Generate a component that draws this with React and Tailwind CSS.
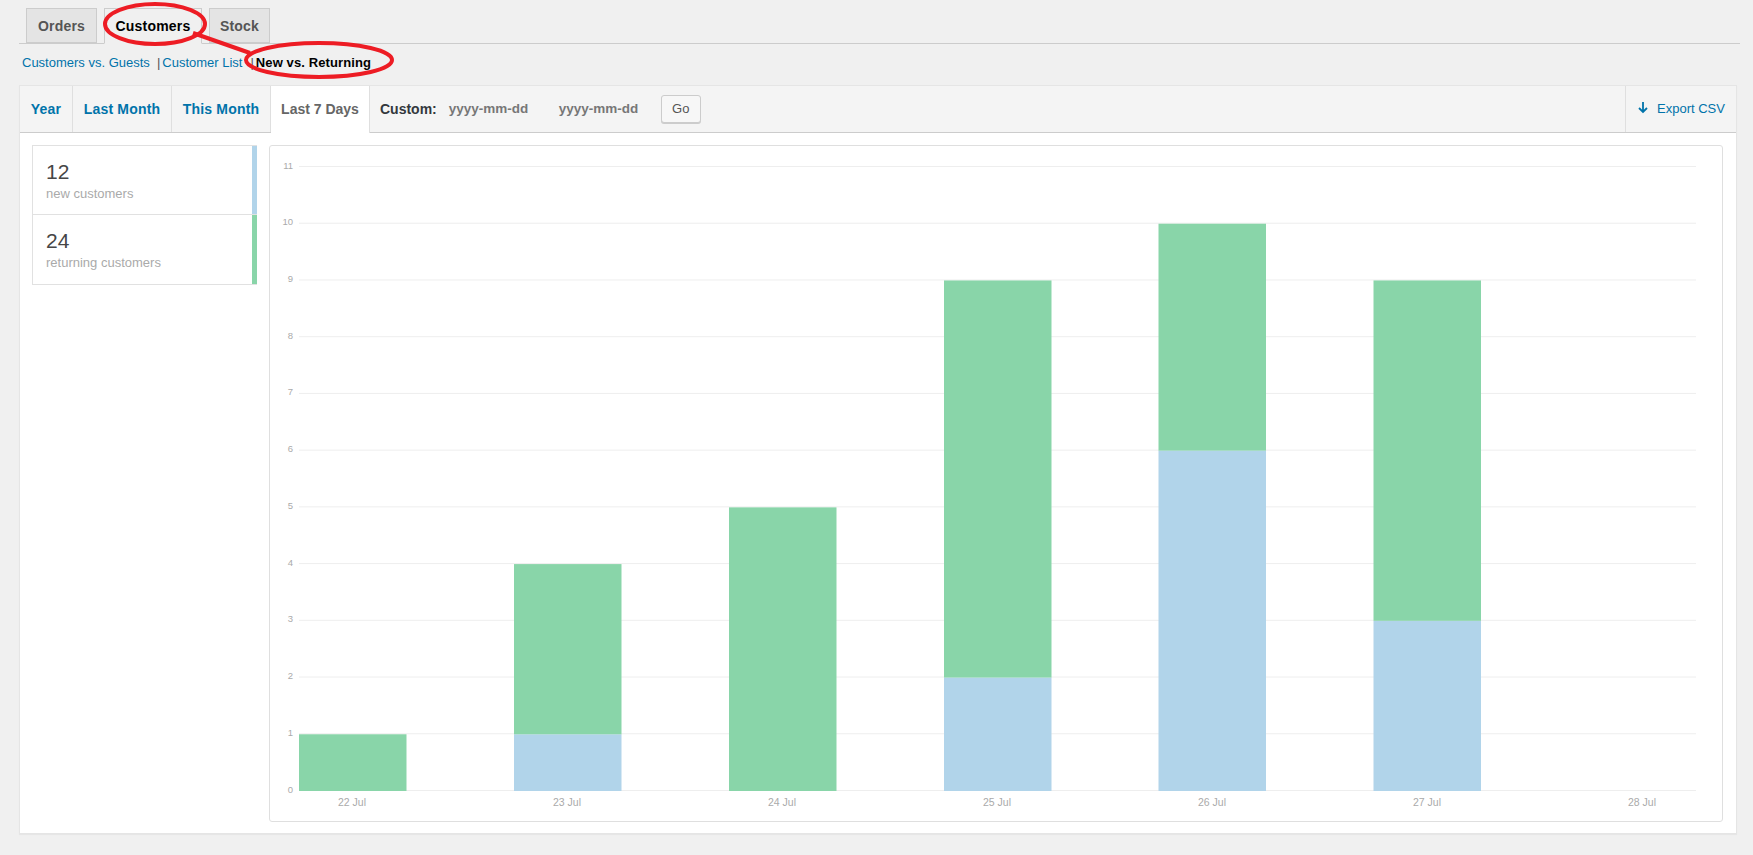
const font = { fontFamily: '"Liberation Sans", Arial, sans-serif' };

const rows = [
  [0, 1, 299],
  [1, 3, 514],
  [0, 5, 729],
  [2, 7, 944],
  [6, 4, 1158.5],
  [3, 6, 1373.5],
];
const labels = ['22 Jul', '23 Jul', '24 Jul', '25 Jul', '26 Jul', '27 Jul', '28 Jul'];

function Chart() {
  const ox = 270;
  const oy = 146;
  const y = (v) => 791 - (v * 624) / 11 - oy;
  return (
    <svg width="1452" height="675" className="block" style={font}>
      {Array.from({ length: 12 }).map((_, i) => (
        <g key={i}>
          <line x1={299 - ox} x2={1696 - ox} y1={y(i) - 0.5} y2={y(i) - 0.5} stroke="#eeeeee" strokeWidth="1" />
          <text x={293 - ox} y={y(i) + 1.5} textAnchor="end" fontSize="9.5" fill="#aaaaaa">{i}</text>
        </g>
      ))}
      {rows.map(([blue, green, x], i) => (
        <g key={i}>
          {blue > 0 && <rect x={x - ox} y={y(blue)} width="107.5" height={y(0) - y(blue)} fill="#b1d4ea" />}
          <rect x={x - ox} y={y(blue + green)} width="107.5" height={y(blue) - y(blue + green)} fill="#89d5a9" />
        </g>
      ))}
      {labels.map((l, i) => (
        <text key={l} x={352 - ox + i * 215} y={805.5 - oy} textAnchor="middle" fontSize="10.5" fill="#aaaaaa">{l}</text>
      ))}
    </svg>
  );
}

function Top({ children, active, w }) {
  return (
    <a style={{ width: w }} className={active
      ? 'h-[36px] -mb-px flex items-center justify-center border border-[#ccc] border-b-[#f0f0f0] bg-[#f0f0f0] text-[14px] leading-none font-bold tracking-[0.2px] text-black'
      : 'h-[35px] flex items-center justify-center border border-[#ccc] bg-[#e4e4e4] text-[14px] leading-none font-bold tracking-[0.2px] text-[#555]'}>
      {children}
    </a>
  );
}

function Range({ children, active, w }) {
  return (
    <a style={{ width: w }} className={active
      ? 'h-[47px] -mb-px flex items-center justify-center bg-white border-r border-[#dfdfdf] text-[14px] font-bold text-[#666]'
      : 'h-[46px] flex items-center justify-center border-r border-[#dfdfdf] text-[14px] font-bold tracking-[0.2px] text-[#0073aa]'}>
      {children}
    </a>
  );
}

function Stat({ value, label, bar, last }) {
  return (
    <div className={last ? 'h-[69px] flex' : 'h-[69px] flex border-b border-[#e1e1e1]'}>
      <div className="flex-1 pl-[13px] pt-[14px]">
        <div className="text-[21px] leading-[24px] text-[#464646]">{value}</div>
        <div className="text-[13px] leading-[16px] mt-[2px] text-[#aaaaaa]">{label}</div>
      </div>
      <div className="w-[5px]" style={{ background: bar }} />
    </div>
  );
}

export default function App() {
  return (
    <div className="relative w-[1753px] h-[855px] overflow-hidden bg-[#f0f0f0]" style={font}>
      <div className="pl-[19px] pr-[13px] pt-[8px]">
        <div className="flex gap-[7px] pl-[7px] h-[36px] border-b border-[#ccc]">
          <Top w={71}>Orders</Top>
          <Top active w={98}>Customers</Top>
          <Top w={61}>Stock</Top>
        </div>
        <div className="h-[41px] flex items-center text-[13px] text-[#0073aa] pb-[4px] pl-[3px] whitespace-nowrap">
          <a>Customers vs. Guests</a>
          <span className="ml-[7px] mr-[2px] text-[#555]">|</span>
          <a>Customer List</a>
          <span className="ml-[8px] mr-[2px] text-[#555]">|</span>
          <b className="text-black tracking-[0.1px]">New vs. Returning</b>
        </div>
      </div>
      <div className="mx-[19px] w-[1718px] h-[749px] bg-white border border-[#e5e5e5] shadow-[0_1px_1px_rgba(0,0,0,0.04)] flex flex-col">
        <div className="h-[47px] flex items-start bg-[#f4f4f4] border-b border-[#ccc]">
          <Range w={53}>Year</Range>
          <Range w={99}>Last Month</Range>
          <Range w={99}>This Month</Range>
          <Range active w={99}>Last 7 Days</Range>
          <div className="h-[46px] flex items-center pl-[10px] text-[14px] font-bold">
            <span className="text-[#32373c]">Custom:</span>
            <span className="ml-[12px] w-[110px] text-[13.5px] text-[#777]">yyyy-mm-dd</span>
            <span className="w-[102px] text-[13.5px] text-[#777]">yyyy-mm-dd</span>
            <button className="h-[28px] w-[40px] rounded-[3px] border border-[#ccc] bg-[#f7f7f7] text-[13px] font-normal text-[#555] shadow-[0_1px_0_#ccc]">Go</button>
          </div>
          <a className="ml-auto h-[46px] w-[111px] flex items-center pl-[11px] border-l border-[#dfdfdf] text-[13px] text-[#0073aa]">
            <svg width="12" height="14" viewBox="0 0 12 14" fill="none" stroke="#0073aa" strokeWidth="1.8" className="mr-[8px] -mt-[3px]">
              <path d="M6 1v10M2 7l4 4 4-4" />
            </svg>
            Export CSV
          </a>
        </div>
        <div className="flex-1 flex items-start pl-[12px] pt-[12px]">
          <div className="w-[225px] border border-[#e1e1e1] border-r-0 bg-white">
            <Stat value="12" label="new customers" bar="#b1d4ea" />
            <Stat value="24" label="returning customers" bar="#89d5a9" last />
          </div>
          <div className="ml-[12px] w-[1454px] h-[677px] border border-[#dfdfdf] rounded-[3px] bg-white">
            <Chart />
          </div>
        </div>
      </div>
      <svg width="1753" height="855" className="absolute left-0 top-0 pointer-events-none" fill="none" stroke="#ed1c24" strokeWidth="4">
        <ellipse cx="155" cy="24" rx="50" ry="20" />
        <ellipse cx="319" cy="60" rx="73" ry="17" />
        <path d="M193 33 L250 53" />
      </svg>
    </div>
  );
}
